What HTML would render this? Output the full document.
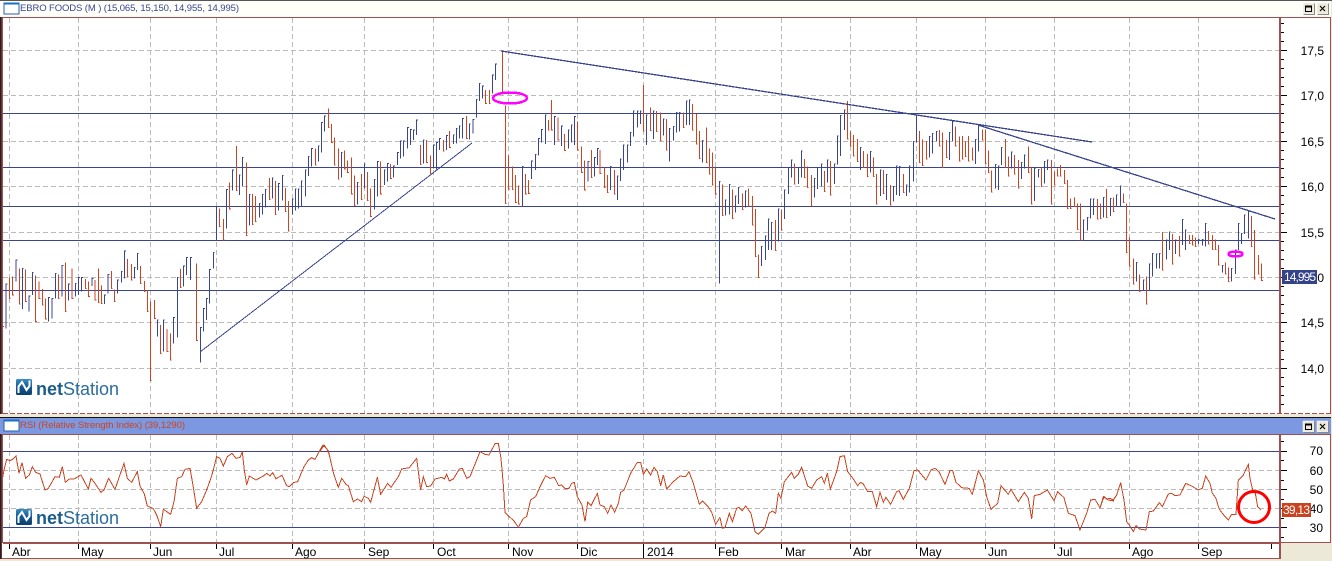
<!DOCTYPE html>
<html><head><meta charset="utf-8"><title>EBRO FOODS</title>
<style>html,body{margin:0;padding:0;background:#ece9d8;width:1332px;height:561px;overflow:hidden}svg{display:block}text{font-family:"Liberation Sans",sans-serif}</style></head>
<body>
<svg width="1332" height="561" viewBox="0 0 1332 561" xmlns="http://www.w3.org/2000/svg">
<defs>
<linearGradient id="lg" x1="0" y1="0" x2="0" y2="1"><stop offset="0" stop-color="#3a8fc4"/><stop offset=".5" stop-color="#14598f"/><stop offset="1" stop-color="#0b3f6e"/></linearGradient>
<g id="btns">
<rect x="0" y="0" width="11" height="11" fill="#ece9d8" stroke="#fff" stroke-width=".5"/><path d="M.5 11.500H11.500V.5" fill="none" stroke="#8a8a80"/><rect x="2.500" y="3.500" width="6" height="5" fill="none" stroke="#000"/><path d="M2 3.500H9" stroke="#000" stroke-width="2"/>
<rect x="14" y="0" width="11" height="11" fill="#ece9d8" stroke="#fff" stroke-width=".5"/><path d="M14.500 11.500H25.500V.5" fill="none" stroke="#8a8a80"/><path d="M17 3L22 8M22 3L17 8" stroke="#000" stroke-width="1.100"/>
</g>
<g id="logo"><rect x="0" y="0" width="16" height="16" rx="1.500" fill="url(#lg)"/><path d="M2.500 14V7.500L6 3L10.500 11L13.500 7V1.500" fill="none" stroke="#fff" stroke-width="2"/></g>
<g id="win"><rect x="0" y="0" width="15" height="11" fill="#fff" stroke="#2a5fa8"/><path d="M0 .5H15" stroke="#1a70c8" stroke-width="2"/></g>
</defs>
<rect width="1332" height="561" fill="#ece9d8"/>
<rect x="0" y="0" width="1332" height="1" fill="#555"/>
<rect x="0" y="1" width="1331" height="16" fill="#fffffa"/>
<rect x="0" y="17" width="1331" height="397" fill="#fff"/>
<rect x="0" y="417" width="1331" height="1" fill="#111"/>
<rect x="0" y="418" width="1331" height="16" fill="#7b98e0"/>
<rect x="0" y="434" width="1331" height="109" fill="#fff"/>
<rect x="0" y="543" width="1281" height="16" fill="#fff"/>

<!-- grid -->
<g stroke="#bbb" stroke-width="1" stroke-dasharray="5 3" shape-rendering="crispEdges" fill="none">
<path d="M3 50.500H1280M3 95.500H1280M3 141.500H1280M3 186.500H1280M3 232.500H1280M3 277.500H1280M3 322.500H1280M3 368.500H1280"/>
<path d="M9.500 18V413M78.500 18V413M150.500 18V413M216.500 18V413M292.500 18V413M364.500 18V413M433.500 18V413M508.500 18V413M577.500 18V413M643.500 18V413M715.500 18V413M781.500 18V413M850.500 18V413M916.500 18V413M985.500 18V413M1054.500 18V413M1129.500 18V413M1198.500 18V413"/>
<path d="M3 470.500H1280M3 489.500H1280M3 508.500H1280"/>
<path d="M9.500 435V542M78.500 435V542M150.500 435V542M216.500 435V542M292.500 435V542M364.500 435V542M433.500 435V542M508.500 435V542M577.500 435V542M643.500 435V542M715.500 435V542M781.500 435V542M850.500 435V542M916.500 435V542M985.500 435V542M1054.500 435V542M1129.500 435V542M1198.500 435V542"/>
</g>

<!-- logos -->
<use href="#logo" x="16" y="379"/>
<text x="36" y="395" font-size="18" fill="#2a6d9c" textLength="83" lengthAdjust="spacing"><tspan font-weight="bold" fill="#1a5c8c">net</tspan>Station</text>
<use href="#logo" x="16" y="509"/>
<text x="36" y="524" font-size="18" fill="#2a6d9c" textLength="83" lengthAdjust="spacing"><tspan font-weight="bold" fill="#1a5c8c">net</tspan>Station</text>

<!-- horizontal solid lines -->
<g stroke="#3a4590" stroke-width="1" shape-rendering="crispEdges">
<path d="M3 113.500H1280M3 167.500H1280M3 206.500H1280M3 240.500H1280M3 290.500H1280M3 451.500H1280M3 527.500H1280"/>
</g>

<!-- bars -->
<g fill="none" stroke-width="3" shape-rendering="crispEdges">
<g transform="translate(0 230) scale(.33333)">
<path stroke="#cc4420" d="M8 252V290h4M28 143V205h4M38 140V195h4M58 115V222h4M77 118V215h4M107 137V275h4M117 155V205h4M127 177V225h4M137 205V267h4M175 133V205h4M196 97V245h4M216 115V205h4M256 147V175h4M266 155V200h4M285 150V210h4M295 115V217h4M304 167V220h4M334 123V175h4M343 178V215h4M382 87V140h4M394 102V150h4M421 108V160h4M433 153V185h4M442 180V245h4M451 215V452h4M464 210V265h4M481 285V370h4M501 297V365h4M511 310V390h4M541 117V173h4M590 100V332h4"/>
<path stroke="#3a4590" d="M18 295V162h4M48 155V90h4M67 237V115h4M87 245V198h4M97 195V127h4M146 275V202h4M156 265V205h4M166 205V130h4M186 200V107h4M206 212V162h4M226 200V160h4M236 195V143h4M245 185V142h4M276 168V145h4M314 222V195h4M324 190V133h4M353 190V150h4M364 158V124h4M374 145V63h4M403 145V112h4M412 120V70h4M472 320V270h4M490 365V270h4M521 340V262h4M532 323V143h4M551 170V108h4M560 135V82h4M572 150V82h4M602 398V292h4M611 305V235h4M620 270V205h4M629 220V118h4M640 115V67h4"/>
</g>
<g transform="translate(205 130) scale(.33333)">
<path stroke="#cc4420" d="M43 235V290h4M55 267V330h4M74 157V237h4M94 48V182h4M124 97V317h4M142 192V284h4M151 198V275h4M193 144V208h4M211 153V254h4M241 174V245h4M250 213V303h4"/>
<path stroke="#3a4590" d="M34 330V230h4M65 295V178h4M83 182V120h4M103 195V135h4M112 170V82h4M133 287V193h4M163 263V220h4M172 254V193h4M181 233V178h4M202 206V144h4M221 242V160h4M232 212V136h4M262 254V207h4M271 242V177h4M280 236V177h4"/>
</g>
<g transform="translate(300 40) scale(.33333)">
<path stroke="#cc4420" d="M46 325V375h4M85 205V262h4M95 252V307h4M103 292V375h4M115 325V417h4M134 331V387h4M143 362V398h4M155 352V462h4M163 407V497h4M184 402V478h4M202 396V482h4M212 445V530h4M242 364V462h4M272 372V415h4M361 315V373h4M380 300V367h4M391 347V400h4M430 300V333h4M449 273V323h4M500 228V295h4M557 150V190h4M568 150V190h4M607 33V160h4M616 197V490h4M626 347V447h4M637 380V448h4M647 405V487h4M656 437V492h4M677 402V462h4M686 420V460h4M745 240V270h4M755 180V270h4M774 232V300h4M794 282V332h4M833 245V330h4M845 320V397h4M854 362V450h4M874 330V412h4"/>
<path stroke="#3a4590" d="M4 498V423h4M16 470V390h4M25 408V350h4M35 380V325h4M55 365V318h4M65 338V247h4M74 275V228h4M124 412V337h4M172 494V427h4M193 445V372h4M223 508V418h4M233 470V364h4M253 435V390h4M263 425V370h4M281 413V378h4M293 375V337h4M302 355V303h4M311 350V303h4M323 325V262h4M332 315V268h4M341 300V270h4M350 285V240h4M370 370V300h4M401 385V315h4M410 388V307h4M419 330V295h4M440 330V287h4M460 312V285h4M469 310V265h4M478 295V258h4M488 295V235h4M508 298V252h4M519 280V238h4M529 233V178h4M538 183V130h4M548 175V138h4M578 160V105h4M587 120V72h4M667 500V380h4M695 417V363h4M706 390V343h4M716 347V295h4M725 307V268h4M736 312V225h4M764 315V230h4M785 318V258h4M805 325V270h4M814 308V255h4M824 315V230h4M864 425V365h4M884 410V352h4M893 375V325h4"/>
</g>
<g transform="translate(600 70) scale(.33333)">
<path stroke="#cc4420" d="M0 240V310h4M13 293V353h4M22 315V368h4M43 300V372h4M130 45V183h4M151 113V182h4M169 123V185h4M181 127V212h4M199 147V240h4M250 127V173h4M277 102V180h4M289 132V222h4M298 183V265h4M319 172V278h4M328 235V312h4M337 247V345h4M347 292V372h4M367 343V437h4M397 358V445h4M427 370V418h4M445 355V408h4M457 378V465h4M466 417V560h4M475 553V623h4M526 450V542h4M544 418V480h4M583 280V342h4M613 267V322h4M622 290V353h4M634 315V408h4M673 303V365h4M691 273V375h4M742 93V207h4M751 185V228h4M760 195V258h4M772 207V275h4M790 243V292h4M802 252V320h4M820 262V320h4M829 312V402h4M850 300V370h4M871 345V405h4"/>
<path stroke="#3a4590" d="M31 360V290h4M52 390V318h4M61 333V267h4M70 300V225h4M82 278V225h4M91 228V187h4M100 200V123h4M112 173V123h4M121 162V123h4M139 225V135h4M160 207V123h4M190 197V147h4M208 275V175h4M220 212V170h4M229 188V127h4M238 185V127h4M259 165V93h4M268 165V90h4M307 278V212h4M358 640V335h4M376 437V390h4M388 433V343h4M406 428V378h4M415 402V352h4M436 413V363h4M484 588V530h4M496 570V498h4M505 540V447h4M514 540V457h4M535 515V417h4M553 447V360h4M565 372V292h4M574 322V270h4M595 342V292h4M604 323V243h4M643 383V325h4M652 357V292h4M664 350V282h4M682 338V270h4M703 342V282h4M712 283V198h4M721 258V137h4M733 180V120h4M781 300V232h4M811 308V245h4M841 378V300h4M859 390V313h4M880 395V350h4M889 375V288h4M898 378V290h4"/>
</g>
<g transform="translate(900 100) scale(.33333)">
<path stroke="#cc4420" d="M10 222V278h4M58 93V187h4M67 118V197h4M79 123V177h4M118 90V138h4M127 98V202h4M139 120V172h4M166 80V138h4M178 110V183h4M187 108V177h4M196 125V170h4M205 108V183h4M217 142V180h4M247 88V120h4M256 88V190h4M265 152V218h4M274 212V276h4M316 117V202h4M325 170V228h4M343 165V222h4M355 180V264h4M385 140V218h4M394 202V312h4M424 203V260h4M454 180V312h4M463 215V255h4M472 205V228h4M481 195V228h4M493 210V250h4M502 240V325h4M511 295V325h4M523 292V320h4M532 310V388h4M541 310V420h4M592 297V357h4M601 310V356h4M619 267V352h4M640 292V335h4M670 280V308h4M679 310V458h4M688 412V498h4M700 475V552h4M718 523V575h4M739 530V612h4M787 396V510h4M817 402V492h4M838 408V468h4M868 405V430h4M877 405V435h4M886 413V440h4M925 393V432h4M937 405V448h4M946 418V448h4M955 435V495h4M976 488V522h4M985 502V545h4M1054 348V440h4M1063 390V537h4M1075 465V522h4M1085 490V542h4"/>
<path stroke="#3a4590" d="M19 288V255h4M28 278V198h4M40 245V125h4M49 128V45h4M88 172V110h4M97 160V100h4M109 125V95h4M148 180V97h4M157 125V65h4M226 192V118h4M235 155V78h4M286 265V193h4M295 270V198h4M304 195V142h4M334 205V156h4M364 237V188h4M373 205V165h4M403 303V205h4M415 233V208h4M433 250V185h4M442 210V180h4M550 420V360h4M562 392V352h4M571 355V297h4M580 345V297h4M610 352V293h4M631 348V295h4M649 320V285h4M661 318V258h4M709 545V488h4M730 570V540h4M748 570V492h4M757 530V460h4M769 505V462h4M778 505V460h4M799 478V420h4M808 450V396h4M826 462V420h4M847 435V358h4M856 450V390h4M895 432V418h4M907 437V418h4M916 440V370h4M967 518V497h4M994 545V505h4M1006 522V450h4M1015 450V370h4M1024 432V400h4M1033 402V345h4M1045 415V335h4"/>
</g>
</g>

<!-- trend lines -->
<g fill="none" stroke="#3a4590" shape-rendering="crispEdges">
<path d="M200 352L472 143" stroke-width="1"/>
<path d="M501 51L1092 142" stroke-width="1.300"/>
<path d="M978 125L1275 219" stroke-width="1.300"/>
</g>
<g shape-rendering="crispEdges">
<ellipse cx="510" cy="98" rx="17" ry="5.500" fill="none" stroke="#f0f" stroke-width="2.500"/>
<ellipse cx="1235.500" cy="254" rx="7" ry="2.500" fill="none" stroke="#f0f" stroke-width="2.500"/>
</g>

<!-- RSI line -->
<g fill="none" stroke="#cc4420" stroke-width="3" shape-rendering="crispEdges">
<polyline transform="translate(0 370) scale(.33333)" points="8,322 12,300 20,268 30,272 38,268 48,258 57,310 66,278 77,325 88,315 97,290 107,307 120,312 135,360 145,355 165,320 178,322 187,290 196,337 208,327 222,327 243,315 265,357 273,325 285,340 303,367 312,360 326,325 345,358 372,280 382,325 395,337 412,305 420,348 433,372 442,408 460,416 470,435 482,470 490,418 512,433 522,395 532,325 545,320 555,298 570,295 578,340 590,415 605,395 620,360 635,318 650,260 660,265 670,288 682,260 696,250 708,265 720,262 727,246 733,300 740,345 748,318 768,330 790,318 800,310 810,318 818,308 828,326 846,316 860,347 868,350 880,338 893,335 912,290 925,270 935,263 945,268 968,226 980,235 990,260"/>
<polyline transform="translate(320 425) scale(.33333)" points="0,80 12,60 25,78 42,150 55,187 65,160 78,178 85,182 100,230 112,222 125,230 132,214 145,220 152,232 172,157 182,208 203,175 213,187 235,155 245,132 268,128 290,100 297,155 302,195 310,155 320,185 332,183 345,162 365,157 373,162 380,148 388,168 400,162 418,132 427,130 440,160 450,155 480,80 495,88 507,90 525,56 535,55 543,100 550,180 555,262 570,277 582,288 595,307 610,280 620,275 632,225 647,215 660,185 677,152 690,160 703,157 716,182 725,180 735,190 747,190 755,175 763,172 772,215 786,240 795,290 803,232 813,242 832,205 840,240 853,245 863,265 873,240 884,262 895,235 902,202 912,195 932,145 952,112 962,112 970,148 980,132 992,150 1002,127 1012,140 1022,182 1030,150 1040,192 1060,170 1080,153 1097,155 1107,140 1120,175 1138,238 1147,228 1165,245 1175,262 1187,298 1200,277"/>
<polyline transform="translate(715 425) scale(.33333)" points="15,277 22,310 30,308 43,265 52,290 65,250 72,247 82,257 92,243 108,265 120,320 130,328 150,307 162,265 172,258 182,265 190,205 198,220 208,170 230,142 238,160 250,147 260,127 278,183 290,190 305,165 320,155 328,175 337,145 346,192 365,140 375,95 388,92 398,140 410,155 428,182 437,172 445,177 458,200 472,200 485,245 495,202 505,232 513,217 527,238 545,200 552,197 565,223 583,190 597,137 608,135 633,165 648,135 660,130 672,140 690,178 705,137 713,137 723,172 740,188 762,190 772,208 790,137 805,165 815,215 828,253 848,235 858,182 880,208 888,193 910,230 928,202 940,220 950,282 958,212 975,208 997,195 1017,227 1028,200 1047,218 1060,265 1080,272 1095,315 1115,265 1127,225 1140,223 1155,248 1167,215 1180,225 1197,228"/>
<polyline transform="translate(1100 400) scale(.33333)" points="0,325 10,290 20,297 30,295 40,300 50,285 62,248 72,300 80,365 90,378 100,395 108,377 118,387 138,390 148,335 160,333 178,308 187,320 205,282 215,280 225,287 240,285 257,250 275,258 295,270 307,265 317,228 330,250 337,280 347,293 358,328 375,350 385,360 395,343 408,343 415,240 430,225 445,193 450,235 458,270 466,280 473,320 482,330"/>
</g>
<circle cx="1254" cy="507" r="15.500" fill="none" stroke="#f00" stroke-width="3"/>

<!-- frame lines -->
<g shape-rendering="crispEdges">
<rect x="0" y="17" width="1" height="397" fill="#222"/><rect x="1" y="17" width="1" height="397" fill="#6b3030"/><rect x="2" y="17" width="1" height="397" fill="#a05050"/>
<rect x="0" y="434" width="1" height="125" fill="#222"/><rect x="1" y="434" width="1" height="125" fill="#6b3030"/><rect x="2" y="434" width="1" height="109" fill="#a05050"/>
<rect x="2" y="17" width="1329" height="1" fill="#a05050"/>
<rect x="2" y="434" width="1329" height="1" fill="#a05050"/>
<rect x="1279" y="17" width="2" height="397" fill="#a05050"/>
<rect x="1279" y="434" width="2" height="125" fill="#a05050"/>
<rect x="1330" y="17" width="1" height="397" fill="#a05050"/>
<rect x="1330" y="434" width="1" height="109" fill="#a05050"/>
<rect x="1281" y="542" width="50" height="1" fill="#a05050"/>
<rect x="3" y="542" width="1276" height="2" fill="#a05050"/>
<rect x="2" y="558" width="1279" height="1" fill="#a05050"/>
<path d="M3 413.500H1331" stroke="#a05050" stroke-dasharray="5 2"/>
</g>

<!-- axis ticks -->
<g stroke="#000" fill="none" shape-rendering="crispEdges">
<path d="M1281 50.500h6M1281 95.500h6M1281 141.500h6M1281 186.500h6M1281 232.500h6M1281 277.500h6M1281 322.500h6M1281 368.500h6"/>
<path d="M1281 23.500h3M1281 32.500h3M1281 41.500h3M1281 59.500h3M1281 68.500h3M1281 77.500h3M1281 86.500h3M1281 104.500h3M1281 113.500h3M1281 122.500h3M1281 132.500h3M1281 150.500h3M1281 159.500h3M1281 168.500h3M1281 177.500h3M1281 195.500h3M1281 204.500h3M1281 213.500h3M1281 223.500h3M1281 241.500h3M1281 250.500h3M1281 259.500h3M1281 268.500h3M1281 286.500h3M1281 295.500h3M1281 304.500h3M1281 313.500h3M1281 332.500h3M1281 341.500h3M1281 350.500h3M1281 359.500h3M1281 377.500h3M1281 386.500h3M1281 395.500h3M1281 404.500h3"/>
<path d="M1281 451.500h6M1281 470.500h6M1281 489.500h6M1281 508.500h6M1281 527.500h6"/>
<path d="M1281 441.500h3M1281 460.500h3M1281 480.500h3M1281 499.500h3M1281 518.500h3M1281 537.500h3"/>
<path d="M9.500 544v5M78.500 544v5M150.500 544v5M216.500 544v5M292.500 544v5M364.500 544v5M433.500 544v5M508.500 544v5M577.500 544v5M715.500 544v5M781.500 544v5M850.500 544v5M916.500 544v5M985.500 544v5M1054.500 544v5M1129.500 544v5M1198.500 544v5M1271.500 544v5"/>
<path d="M643.500 544v14"/>
</g>

<!-- title bars -->
<use href="#win" x="4" y="3"/>
<text x="20" y="11" font-size="9.500" fill="#3a4590" textLength="219" lengthAdjust="spacing">EBRO FOODS (M ) (15,065, 15,150, 14,955, 14,995)</text>
<use href="#btns" x="1303" y="3"/>
<use href="#win" x="4" y="420"/>
<text x="20" y="428" font-size="9.500" fill="#cc4420" textLength="165" lengthAdjust="spacing">RSI (Relative Strength Index) (39,1290)</text>
<use href="#btns" x="1303" y="421"/>

<!-- axis labels -->
<g font-size="12" fill="#000" text-anchor="end">
<text x="1324" y="55">17,5</text><text x="1324" y="100">17,0</text><text x="1324" y="146">16,5</text><text x="1324" y="191">16,0</text><text x="1324" y="237">15,5</text><text x="1324" y="282">15,0</text><text x="1324" y="327">14,5</text><text x="1324" y="373">14,0</text>
<text x="1323" y="455">70</text><text x="1323" y="475">60</text><text x="1323" y="494">50</text><text x="1323" y="513">40</text><text x="1323" y="532">30</text>
</g>
<rect x="1282" y="270" width="35" height="14" fill="#34428a"/>
<text x="1284" y="281" font-size="12" fill="#fff" textLength="32" lengthAdjust="spacing">14,995</text>
<rect x="1282" y="503" width="29" height="14" fill="#c8431f"/>
<text x="1283" y="514" font-size="12" fill="#fff" textLength="27" lengthAdjust="spacing">39,13</text>

<g font-size="12" fill="#000">
<text x="12" y="556">Abr</text><text x="81" y="556">May</text><text x="153" y="556">Jun</text><text x="219" y="556">Jul</text><text x="295" y="556">Ago</text><text x="368" y="556">Sep</text><text x="437" y="556">Oct</text><text x="512" y="556">Nov</text><text x="580" y="556">Dic</text><text x="647" y="556">2014</text><text x="718" y="556">Feb</text><text x="785" y="556">Mar</text><text x="853" y="556">Abr</text><text x="919" y="556">May</text><text x="988" y="556">Jun</text><text x="1057" y="556">Jul</text><text x="1132" y="556">Ago</text><text x="1201" y="556">Sep</text>
</g>
</svg>
</body></html>
